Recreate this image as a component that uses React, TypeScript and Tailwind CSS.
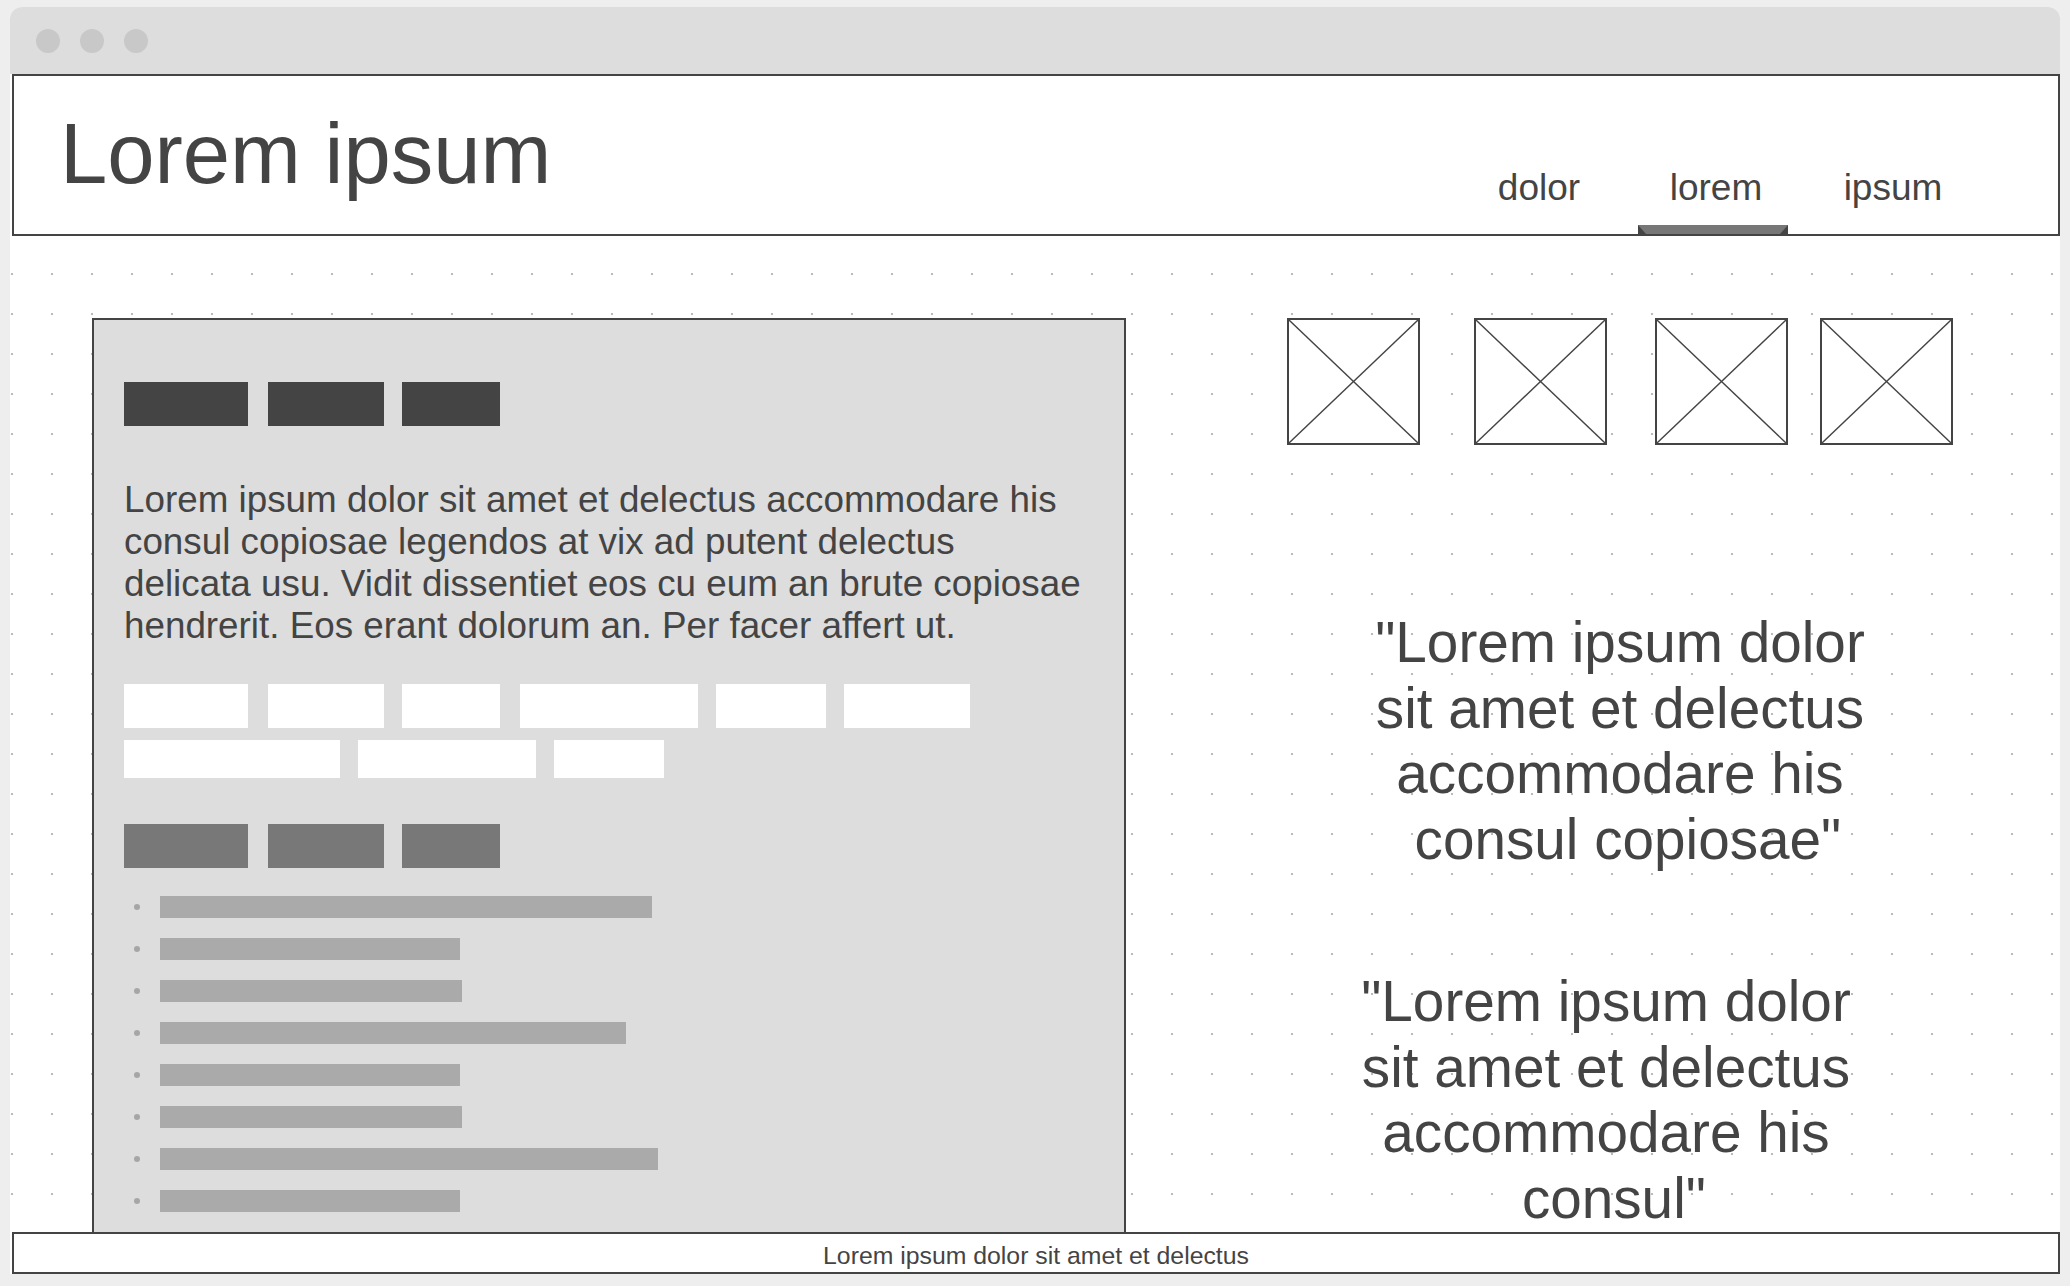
const ROW_A = ["w-[124px]", "ml-[20px] w-[116px]", "ml-[18px] w-[98px]"];

const ROW_WHITE_1 = [
  "w-[124px]",
  "ml-[20px] w-[116px]",
  "ml-[18px] w-[98px]",
  "ml-[20px] w-[178px]",
  "ml-[18px] w-[110px]",
  "ml-[18px] w-[126px]",
];

const ROW_WHITE_2 = ["w-[216px]", "ml-[18px] w-[178px]", "ml-[18px] w-[110px]"];

const LIST_BARS = [
  "w-[492px]",
  "w-[300px]",
  "w-[302px]",
  "w-[466px]",
  "w-[300px]",
  "w-[302px]",
  "w-[498px]",
  "w-[300px]",
];

const IMAGE_GAPS = ["ml-0", "ml-[54px]", "ml-[48px]", "ml-[32px]"];

const TABS = [
  { label: "dolor", active: false },
  { label: "lorem", active: true },
  { label: "ipsum", active: false },
];

export default function App() {
  return (
    <div className="h-[1286px] w-[2070px] overflow-hidden bg-[#eeeeee] pl-[10px] pt-[7px] font-['Liberation_Sans',Arial,sans-serif] text-[#444444]">
      <div className="flex h-[1267px] w-[2050px] flex-col overflow-hidden rounded-t-[12px] bg-white">
        <TitleBar />
        <Header />

        {/* canvas with the dotted grid */}
        <main className="flex min-h-0 flex-1 bg-[radial-gradient(circle_at_1px_1px,#bababa_1px,transparent_1.6px)] bg-size-[40px_40px] bg-position-[1px_37px]">
          <ContentPanel />
          <RightColumn />
        </main>

        <footer className="ml-[2px] h-[42px] flex-none border-2 border-[#444444] bg-white pt-[10px] text-center text-[24.8px] leading-none">
          Lorem ipsum dolor sit amet et delectus
        </footer>
      </div>
    </div>
  );
}

function TitleBar() {
  return (
    <div className="flex h-[67px] flex-none items-center gap-[20px] bg-[#dddddd] pl-[26px]">
      <span className="h-[24px] w-[24px] rounded-full bg-[#c8c8c8]" />
      <span className="h-[24px] w-[24px] rounded-full bg-[#c8c8c8]" />
      <span className="h-[24px] w-[24px] rounded-full bg-[#c8c8c8]" />
    </div>
  );
}

function Header() {
  return (
    <header className="ml-[2px] flex h-[162px] flex-none items-start border-2 border-[#444444] bg-white">
      <h1 className="pl-[46px] pt-[35px] text-[85px] leading-none font-normal">Lorem ipsum</h1>

      <nav className="ml-auto flex gap-[27px] pr-[90px] pt-[93px]">
        {TABS.map((tab) => (
          <div key={tab.label} className="flex w-[150px] flex-col items-center">
            <span className="text-[37px] leading-none">{tab.label}</span>
            {tab.active ? (
              <span className="-ml-[6px] mt-[19px] h-0 w-[150px] border-x-[8px] border-t-[9px] border-x-[#444444] border-t-[#777777]" />
            ) : (
              <span className="mt-[19px] h-[9px]" />
            )}
          </div>
        ))}
      </nav>
    </header>
  );
}

function ContentPanel() {
  return (
    <section className="ml-[82px] mt-[82px] w-[1034px] flex-none border-2 border-b-0 border-[#444444] bg-[#dddddd] pl-[30px] pt-[62px]">
      <div className="flex">
        {ROW_A.map((c, i) => (
          <span key={i} className={`h-[44px] bg-[#444444] ${c}`} />
        ))}
      </div>

      <p className="mt-[53px] text-[36.8px] leading-[42px] whitespace-nowrap">
        Lorem ipsum dolor sit amet et delectus accommodare his
        <br />
        consul copiosae legendos at vix ad putent delectus
        <br />
        delicata usu. Vidit dissentiet eos cu eum an brute copiosae
        <br />
        hendrerit. Eos erant dolorum an. Per facer affert ut.
      </p>

      <div className="mt-[37px] flex">
        {ROW_WHITE_1.map((c, i) => (
          <span key={i} className={`h-[44px] bg-white ${c}`} />
        ))}
      </div>
      <div className="mt-[12px] flex">
        {ROW_WHITE_2.map((c, i) => (
          <span key={i} className={`h-[38px] bg-white ${c}`} />
        ))}
      </div>

      <div className="mt-[46px] flex">
        {ROW_A.map((c, i) => (
          <span key={i} className={`h-[44px] bg-[#787878] ${c}`} />
        ))}
      </div>

      <ul className="mt-[28px] flex flex-col gap-[20px]">
        {LIST_BARS.map((w, i) => (
          <li key={i} className="flex h-[22px] items-center">
            <span className="ml-[10px] mr-[20px] h-[6px] w-[6px] rounded-full bg-[#a6a6a6]" />
            <span className={`h-[22px] bg-[#aaaaaa] ${w}`} />
          </li>
        ))}
      </ul>
    </section>
  );
}

function RightColumn() {
  return (
    <section className="flex min-w-0 flex-1 flex-col pt-[82px]">
      <div className="ml-[161px] flex">
        {IMAGE_GAPS.map((c, i) => (
          <ImagePlaceholder key={i} className={c} />
        ))}
      </div>

      <blockquote className="ml-[194px] mt-[165px] w-[600px] text-center text-[56.7px] leading-[65.5px] whitespace-nowrap">
        "Lorem ipsum dolor
        <br />
        sit amet et delectus
        <br />
        accommodare his
        <br />
        {"\u00a0"}consul copiosae"
      </blockquote>

      <blockquote className="ml-[180px] mt-[97px] w-[600px] text-center text-[56.7px] leading-[65.5px] whitespace-nowrap">
        "Lorem ipsum dolor
        <br />
        sit amet et delectus
        <br />
        accommodare his
        <br />
        {"\u00a0"}consul"
      </blockquote>
    </section>
  );
}

function ImagePlaceholder({ className }: { className: string }) {
  return (
    <div className={`h-[127px] w-[133px] flex-none border-2 border-[#444444] bg-white ${className}`}>
      <svg viewBox="0 0 100 100" preserveAspectRatio="none" className="block h-full w-full">
        <line x1="0" y1="0" x2="100" y2="100" stroke="#444444" strokeWidth="1.4" vectorEffect="non-scaling-stroke" />
        <line x1="100" y1="0" x2="0" y2="100" stroke="#444444" strokeWidth="1.4" vectorEffect="non-scaling-stroke" />
      </svg>
    </div>
  );
}
